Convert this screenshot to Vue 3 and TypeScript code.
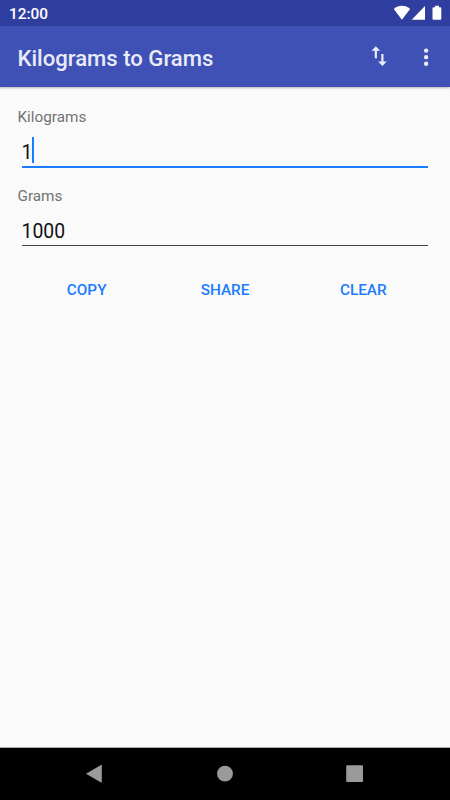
<script setup lang="ts">
import { ref } from 'vue'

interface Field {
  label: string
  value: string
  focused: boolean
}

const fields = ref<Field[]>([
  { label: 'Kilograms', value: '1', focused: true },
  { label: 'Grams', value: '1000', focused: false },
])
const actions: string[] = ['COPY', 'SHARE', 'CLEAR']
</script>

<template>
  <div class="screen">
    <div class="status">
      <span class="clock">12:00</span>
      <svg class="status-icons" width="50" height="26" viewBox="0 0 50 26" fill="#fff">
        <path d="M9.9 19.7 L1.8 9 C6.6 4.7 13.4 4.7 18.1 9 Z" />
        <path d="M19.7 19.7 H33 V6 Z" />
        <path d="M41.5 7.2 H43 V5.7 H47 V7.2 H48.2 Q49.3 7.2 49.3 8.3 V18.7 Q49.3 19.8 48.2 19.8 H41.5 Q40.5 19.8 40.5 18.7 V8.3 Q40.5 7.2 41.5 7.2 Z" />
      </svg>
    </div>
    <header class="appbar">
      <h1 class="title">Kilograms to Grams</h1>
      <button class="icon-button swap" aria-label="Swap">
        <svg viewBox="0 0 24 24"><path d="M9 3L5 6.99h3V14h2V6.99h3L9 3zm7 14.01V10h-2v7.01h-3L15 21l4-3.99h-3z" /></svg>
      </button>
      <button class="icon-button more" aria-label="More">
        <svg viewBox="0 0 24 24"><path d="M12 8a2 2 0 1 0 0-4 2 2 0 0 0 0 4zm0 2a2 2 0 1 0 0 4 2 2 0 0 0 0-4zm0 6a2 2 0 1 0 0 4 2 2 0 0 0 0-4z" /></svg>
      </button>
    </header>
    <main class="content">
      <div v-for="field in fields" :key="field.label" class="field">
        <div class="label">{{ field.label }}</div>
        <div class="input" :class="{ focused: field.focused }">
          <span class="value">{{ field.value }}</span><i v-if="field.focused" class="caret"></i>
        </div>
      </div>
      <div class="actions">
        <button v-for="action in actions" :key="action" class="action">{{ action }}</button>
      </div>
    </main>
    <nav class="navbar">
      <svg width="450" height="52" viewBox="0 0 450 52" fill="#9a9a9a">
        <path d="M86 25.7 L101 16.9 Q101.8 16.5 101.8 17.4 V34 Q101.8 34.9 101 34.4 Z" />
        <circle cx="225" cy="25.7" r="7.9" />
        <rect x="346.2" y="17.3" width="16.8" height="16.8" rx="1" />
      </svg>
    </nav>
  </div>
</template>

<style>
body {
  margin: 0;
}
</style>

<style scoped>
.screen {
  display: flex;
  flex-direction: column;
  width: 450px;
  height: 800px;
  overflow: hidden;
  background: #fafafa;
  font-family: Roboto, 'Liberation Sans', sans-serif;
}
.status {
  display: flex;
  align-items: center;
  justify-content: space-between;
  box-sizing: border-box;
  height: 26px;
  padding: 0 8px 0 9px;
  background: #303f9f;
  color: #fff;
}
.clock {
  padding-top: 2px;
  font-size: 15.4px;
  font-weight: 500;
  line-height: 18px;
}
.status-icons {
  display: block;
}
.appbar {
  display: flex;
  align-items: center;
  box-sizing: border-box;
  height: 61px;
  padding: 0 11px 0 17.5px;
  background: #3f51b5;
  box-shadow: 0 1px 2px rgba(0, 0, 0, 0.28);
}
.title {
  flex: 1;
  margin: 2px 0 0;
  color: #e9ebf7;
  font-size: 22.1px;
  font-weight: 500;
  line-height: 26px;
}
button {
  padding: 0;
  border: 0;
  background: none;
  font-family: inherit;
}
.icon-button {
  width: 26.25px;
  height: 26.25px;
}
.icon-button svg {
  display: block;
  width: 26.25px;
  height: 26.25px;
  fill: #e9ebf7;
}
.swap {
  margin-right: 20.5px;
}
.more {
  margin-top: 1px;
}
.content {
  flex: 1;
  padding: 21px 17.5px 0;
}
.field {
  height: 79px;
}
.label {
  color: #737373;
  font-size: 15.3px;
  line-height: 18px;
}
.input {
  display: flex;
  align-items: center;
  box-sizing: border-box;
  height: 35px;
  margin: 8px 4.5px 0;
  padding-top: 1px;
  background: linear-gradient(#414141, #414141) left 0 bottom 2px / 100% 1px no-repeat;
  color: #111;
  font-size: 19.4px;
  line-height: 24px;
}
.input.focused {
  background: linear-gradient(#1a7cff, #1a7cff) left 0 bottom 1px / 100% 2px no-repeat;
}
.value {
  margin: 1px 0 0 -0.5px;
}
.caret {
  width: 2px;
  height: 26px;
  margin: 0 0 4px -0.5px;
  background: #1a7cff;
}
.actions {
  display: flex;
  padding-top: 6px;
}
.action {
  flex: 1;
  height: 36px;
  color: #1a7cff;
  font-size: 15.3px;
  font-weight: 500;
}
.navbar {
  height: 52px;
  border-top: 1px solid #aaa;
  background: #000;
}
.navbar svg {
  display: block;
}
</style>
